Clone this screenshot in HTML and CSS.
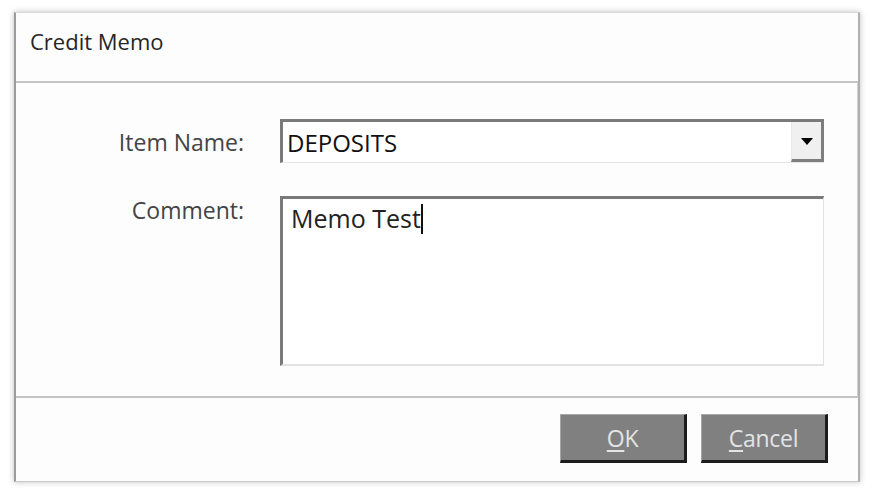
FILE: index.html
```html
<!DOCTYPE html>
<html>
<head>
<meta charset="utf-8">
<link rel="stylesheet" href="styles.css">
</head>
<body>
<div class="window">
  <div class="header">Credit Memo</div>
  <div class="content">
    <div class="form">
      <div class="label label-item">Item Name:</div>
      <div class="combo">
        <div class="combo-text">DEPOSITS</div>
        <div class="combo-btn"><span class="arrow"></span></div>
      </div>
      <div class="label label-comment">Comment:</div>
      <div class="textarea"><span class="memo">Memo Test</span><span class="caret"></span></div>
    </div>
  </div>
  <div class="footer">
    <div class="btn"><span class="ul">O</span>K</div>
    <div class="btn"><span class="ul">C</span>ancel</div>
  </div>
</div>
</body>
</html>
```

FILE: styles.css
```css
* { box-sizing: border-box; }
html, body { margin: 0; padding: 0; background: #ffffff; }
body {
  width: 873px;
  height: 494px;
  padding: 12px 14px 0 14px;
  font-family: "Open Sans", "Noto Sans", "Liberation Sans", sans-serif;
}
.window {
  width: 846px;
  height: 470px;
  background: #fdfdfd;
  border-left: 2px solid #9c9c9c;
  border-top: 1px solid #d8d8d8;
  border-right: 2px solid #b0b0b0;
  border-bottom: 1px solid #c8c8c8;
  box-shadow: 0 0 6px rgba(0,0,0,0.25);
  display: flex;
  flex-direction: column;
}
.header {
  height: 70px;
  padding: 13px 0 0 14px;
  font-size: 22px;
  line-height: 30px;
  color: #262626;
  border-bottom: 2px solid #c4c4c4;
}
.content {
  height: 315px;
  border-right: 1px solid #d0d0d0;
  border-bottom: 2px solid #c4c4c4;
  padding: 36px 0 0 0;
}
.form {
  display: grid;
  grid-template-columns: 228px 544px;
  column-gap: 36px;
  row-gap: 33px;
  grid-template-rows: 44px 170px;
}
.label {
  text-align: right;
  font-size: 23px;
  line-height: 31px;
  color: #444;
}
.label-item { padding-top: 8px; }
.label-comment { margin-top: -1px; }
.combo {
  display: flex;
  background: #fff;
  border-top: 3px solid #7a7a7a;
  border-left: 3px solid #7a7a7a;
  border-bottom: 1px solid #e6e6e6;
}
.combo-text {
  flex: 1;
  font-size: 24px;
  line-height: 33px;
  color: #111;
  padding: 4px 0 0 4px;
}
.combo-btn {
  width: 33px;
  background: #f0f0f0;
  border-left: 1px solid #e8e8e8;
  border-right: 3px solid #7e7e7e;
  border-bottom: 3px solid #7e7e7e;
  display: flex;
  align-items: center;
  justify-content: center;
}
.arrow {
  width: 0; height: 0;
  border-left: 6px solid transparent;
  border-right: 6px solid transparent;
  border-top: 7px solid #000;
  margin-top: 2px;
}
.textarea {
  background: #fff;
  border-top: 3px solid #7a7a7a;
  border-left: 3px solid #7a7a7a;
  border-right: 1px solid #e2e2e2;
  border-bottom: 2px solid #e2e2e2;
  padding: 2px 0 0 8px;
  font-size: 25px;
  line-height: 34px;
  color: #222;
  display: flex;
  align-items: flex-start;
}
.caret {
  display: inline-block;
  width: 2px;
  height: 30px;
  background: #111;
  margin-top: 3px;
}
.footer {
  flex: 1;
  display: flex;
  justify-content: flex-end;
  align-items: flex-start;
  gap: 14px;
  padding: 16px 30px 0 0;
}
.btn {
  width: 127px;
  height: 49px;
  background: #808080;
  border-top: 1px solid #a8a8a8;
  border-left: 1px solid #a8a8a8;
  border-right: 3px solid #1c1c1c;
  border-bottom: 3px solid #1c1c1c;
  color: #e4e4e4;
  font-size: 23px;
  display: flex;
  align-items: center;
  justify-content: center;
  letter-spacing: -0.3px;
}
.ul { text-decoration: underline; text-underline-offset: 3px; }
```
